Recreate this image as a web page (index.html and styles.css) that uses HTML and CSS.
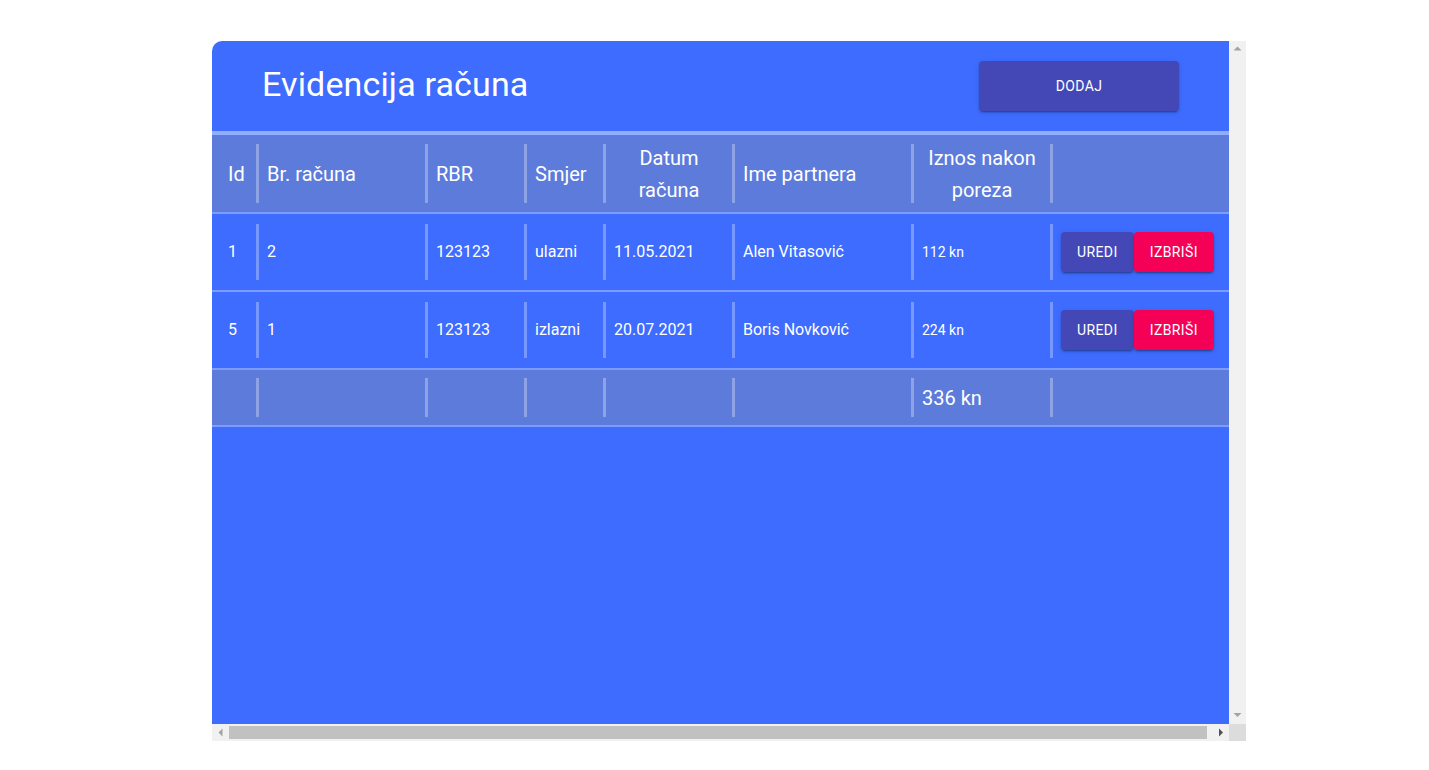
FILE: index.html
```html
<!DOCTYPE html>
<html lang="hr">
<head>
<meta charset="utf-8">
<title>Evidencija računa</title>
<link rel="stylesheet" href="styles.css">
</head>
<body>
<div class="frame">
  <div class="viewport">
    <div class="content">
      <header class="topbar">
        <h1 class="title">Evidencija računa</h1>
        <button class="btn btn-indigo btn-add">DODAJ</button>
      </header>
      <div class="band"></div>
      <div class="table">
        <div class="row row-head">
          <div class="cell c-id">Id</div>
          <div class="cell sep">Br. računa</div>
          <div class="cell sep">RBR</div>
          <div class="cell sep">Smjer</div>
          <div class="cell sep center">Datum<br>računa</div>
          <div class="cell sep">Ime partnera</div>
          <div class="cell sep center">Iznos nakon<br>poreza</div>
          <div class="cell sep"></div>
        </div>
        <div class="row row-data">
          <div class="cell c-id">1</div>
          <div class="cell sep">2</div>
          <div class="cell sep">123123</div>
          <div class="cell sep">ulazni</div>
          <div class="cell sep">11.05.2021</div>
          <div class="cell sep">Alen Vitasović</div>
          <div class="cell sep small">112 kn</div>
          <div class="cell sep actions"><button class="btn btn-indigo">UREDI</button><button class="btn btn-pink">IZBRIŠI</button></div>
        </div>
        <div class="row row-data">
          <div class="cell c-id">5</div>
          <div class="cell sep">1</div>
          <div class="cell sep">123123</div>
          <div class="cell sep">izlazni</div>
          <div class="cell sep">20.07.2021</div>
          <div class="cell sep">Boris Novković</div>
          <div class="cell sep small">224 kn</div>
          <div class="cell sep actions"><button class="btn btn-indigo">UREDI</button><button class="btn btn-pink">IZBRIŠI</button></div>
        </div>
        <div class="row row-foot">
          <div class="cell c-id"></div>
          <div class="cell sep"></div>
          <div class="cell sep"></div>
          <div class="cell sep"></div>
          <div class="cell sep"></div>
          <div class="cell sep"></div>
          <div class="cell sep total">336 kn</div>
          <div class="cell sep"></div>
        </div>
      </div>
    </div>
  </div>
  <div class="vbar">
    <div class="sb-btn"><svg width="17" height="17" viewBox="0 0 17 17"><polygon points="4.5,9.5 12.5,9.5 8.5,5.5" fill="#a3a3a3"/></svg></div>
    <div class="sb-track"></div>
    <div class="sb-btn"><svg width="17" height="17" viewBox="0 0 17 17"><polygon points="4.5,6 12.5,6 8.5,10" fill="#a3a3a3"/></svg></div>
  </div>
  <div class="hbar">
    <div class="sb-btn"><svg width="17" height="17" viewBox="0 0 17 17"><polygon points="10.5,4.5 10.5,12.5 6.5,8.5" fill="#a3a3a3"/></svg></div>
    <div class="sb-track"><div class="sb-thumb"></div></div>
    <div class="sb-btn"><svg width="17" height="17" viewBox="0 0 17 17"><polygon points="7,4.5 7,12.5 11,8.5" fill="#505050"/></svg></div>
  </div>
  <div class="corner"></div>
</div>
</body>
</html>
```

FILE: styles.css
```css
html, body {
  margin: 0;
  padding: 0;
  background: #ffffff;
  font-family: Roboto, "Liberation Sans", Arial, sans-serif;
}

.frame {
  margin: 41px 0 0 212px;
  width: 1034px;
  height: 700px;
  display: grid;
  grid-template-columns: 1017px 17px;
  grid-template-rows: 683px 17px;
  border-top-left-radius: 10px;
  overflow: hidden;
}

.viewport {
  background: #3d6cff;
  overflow: hidden;
}

/* fake classic scrollbars */
.vbar {
  display: flex;
  flex-direction: column;
  background: #f1f1f1;
}
.hbar {
  display: flex;
  background: #f1f1f1;
}
.sb-btn {
  width: 17px;
  height: 17px;
  flex: none;
}
.sb-btn svg { display: block; }
.sb-track {
  flex: 1;
  display: flex;
  align-items: center;
}
.sb-thumb {
  width: 978px;
  height: 13px;
  background: #c1c1c1;
}
.corner {
  background: #dcdcdc;
}

.content {
  width: 1022px;
  color: #ffffff;
}

.topbar {
  height: 90px;
  display: flex;
  align-items: center;
  justify-content: space-between;
  padding: 0 55px 0 50px;
  box-sizing: border-box;
}

.title {
  margin: 0 0 4px 0;
  font-size: 34px;
  font-weight: 400;
  line-height: 1;
  letter-spacing: 0.15px;
}

.btn {
  font-family: Roboto, "Liberation Sans", Arial, sans-serif;
  font-size: 14px;
  font-weight: 400;
  letter-spacing: 0.4px;
  color: #ffffff;
  border: none;
  border-radius: 4px;
  padding: 0 16px;
  height: 40px;
  cursor: pointer;
  box-shadow: 0 3px 1px -2px rgba(0,0,0,0.2), 0 2px 2px 0 rgba(0,0,0,0.14), 0 1px 5px 0 rgba(0,0,0,0.12);
}

.btn-indigo { background: #4348b6; }
.btn-pink { background: #f50057; }

.btn-add {
  width: 200px;
  height: 50px;
}

.band {
  height: 4px;
  background: #90aeff;
}

.row {
  display: grid;
  grid-template-columns: 44px 169px 99px 79px 129px 179px 139px 184px;
  border-bottom: 2px solid #7d9cff;
}

.row-head {
  background: #5d7bdb;
  padding: 9px 0;
  font-size: 20px;
  line-height: 32px;
}
.row-head .cell { height: 59px; }

.row-data {
  padding: 10px 0;
  font-size: 16px;
  line-height: 20px;
}
.row-data .cell { height: 56px; }

.row-foot {
  background: #5d7bdb;
  padding: 8px 0;
  font-size: 20px;
  line-height: 24px;
}
.row-foot .cell { height: 39px; }

.cell {
  display: flex;
  align-items: center;
  padding-left: 8px;
  box-sizing: border-box;
  white-space: nowrap;
}

.cell.c-id { padding-left: 16px; }

.cell.sep {
  border-left: 3px solid rgba(255,255,255,0.3);
}

.cell.center {
  justify-content: center;
  text-align: center;
  padding-left: 0;
}

.cell.small { font-size: 14px; }

.actions .btn { flex: none; }
```
